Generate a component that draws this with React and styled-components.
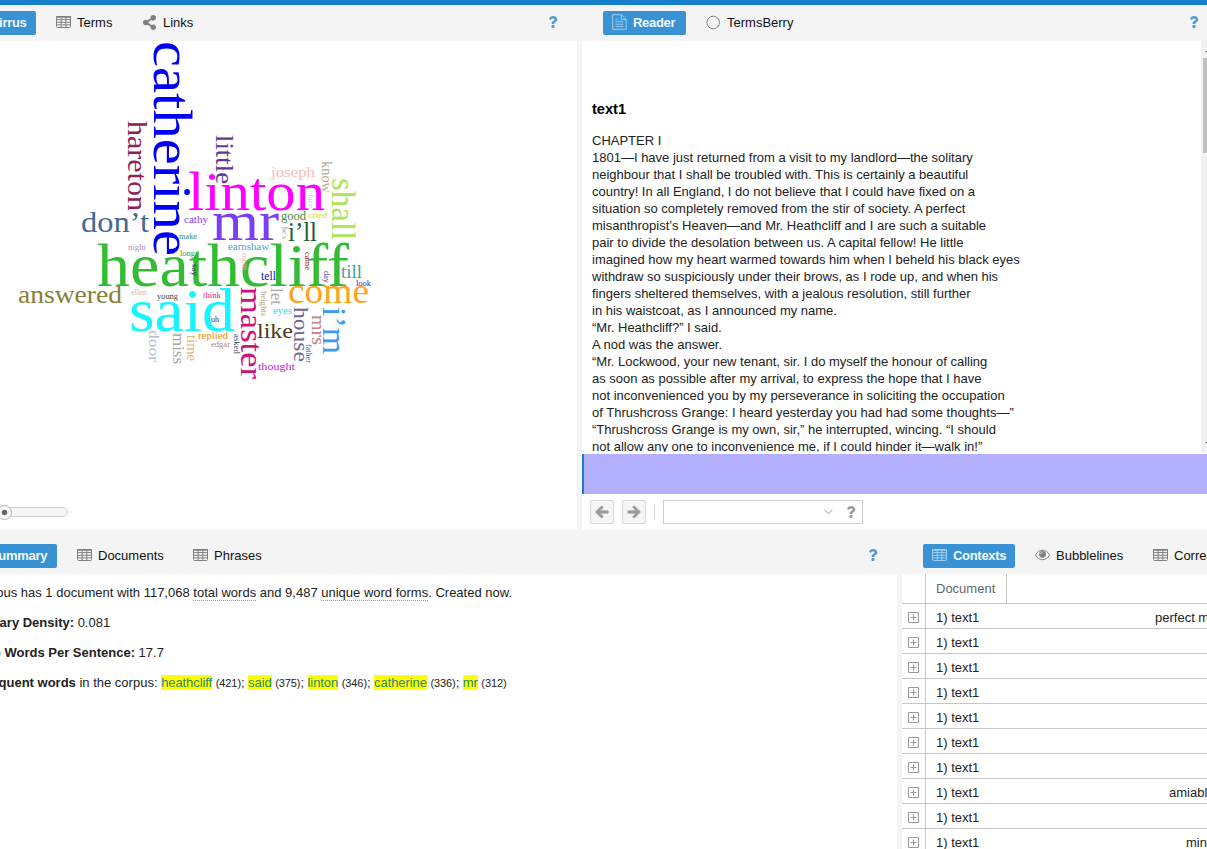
import React from "react";
import styled, { createGlobalStyle } from "styled-components";
import { FaArrowLeft, FaArrowRight, FaQuestion, FaShareAlt } from "react-icons/fa";

const GlobalStyle = createGlobalStyle`
  * { box-sizing: border-box; }
  body {
    margin: 0;
    background: #f4f4f4;
    font: 13px/17px "Liberation Sans", Arial, sans-serif;
    color: #222;
    overflow: hidden;
  }
`;

const Shell = styled.div`
  width: 1207px;
  height: 849px;
  display: flex;
  flex-direction: column;
  overflow: hidden;
  border-top: 5px solid #157fcc;
`;

const PanelRow = styled.div`
  display: grid;
  grid-template-columns: ${(p) => p.$columns};
  column-gap: 5px;
  height: ${(p) => p.$height}px;
  margin-bottom: 8px;
  flex: none;
`;

const Panel = styled.section`
  display: flex;
  flex-direction: column;
  min-width: 0;
  overflow: hidden;
`;

const PanelHeader = styled.header`
  display: flex;
  align-items: center;
  gap: 11px;
  height: 36px;
  flex: none;
  padding-left: ${(p) => p.$indent || 0}px;
  margin-left: ${(p) => p.$shift || 0}px;
`;

const Tab = styled.button`
  display: flex;
  align-items: center;
  gap: 6px;
  flex: none;
  height: 24px;
  width: ${(p) => p.$width}px;
  padding: 0 9px 2px;
  border: 0;
  border-radius: 2px;
  font: ${(p) => (p.$active ? "bold" : "normal")} 13px "Liberation Sans", Arial, sans-serif;
  letter-spacing: ${(p) => (p.$active ? "-0.3px" : "0")};
  white-space: nowrap;
  color: ${(p) => (p.$active ? "#f2f8fd" : "#111")};
  background: ${(p) => (p.$active ? "#3892d4" : "transparent")};
  svg { flex: none; color: ${(p) => (p.$active ? "#9fcdf0" : "#808080")}; }
`;

const Help = styled.span`
  display: flex;
  margin-left: auto;
  margin-right: ${(p) => p.$right}px;
  padding-bottom: 2px;
  color: #4f9bd3;
`;

const PanelBody = styled.div`
  flex: 1;
  min-height: 0;
  background: #fff;
  display: flex;
  flex-direction: column;
  overflow: hidden;
`;

const CloudCanvas = styled.svg`
  display: block;
  width: 577px;
  height: 453px;
  flex: none;
  font-family: "Liberation Serif", serif;
`;

const SliderTrack = styled.div`
  width: 78px;
  height: 10px;
  margin: 13px 0 0 -10px;
  padding-left: 6px;
  display: flex;
  align-items: center;
  border: 1px solid #cfcfcf;
  border-radius: 5px;
  background: #f5f5f5;
`;

const SliderThumb = styled.div`
  width: 15px;
  height: 15px;
  flex: none;
  border: 1px solid #b5b5b5;
  border-radius: 50%;
  background: radial-gradient(circle, #666 0 2.4px, #f8f8f8 3.2px);
`;

const ReaderArea = styled.div`
  display: flex;
  height: 411px;
  flex: none;
  overflow: hidden;
`;

const ReaderText = styled.div`
  flex: 1;
  padding: 59px 0 0 10px;
  white-space: nowrap;
`;

const ReaderTitle = styled.h1`
  margin: 0 0 14px;
  font: bold 14.6px/18px "Liberation Sans", Arial, sans-serif;
  color: #000;
`;

const ReaderLine = styled.div`
  height: 17px;
`;

const Scrollbar = styled.div`
  display: flex;
  flex-direction: column;
  width: 6px;
  padding: 10px 0 9px 2px;
  background: #f1f1f1;
`;

const ScrollArrow = styled.span`
  width: 2px;
  height: 1px;
  align-self: flex-end;
  background: #777;
`;

const ScrollThumb = styled.div`
  height: 95px;
  margin: 6px 0 auto;
  background: #c1c1c1;
`;

const Segment = styled.div`
  height: 40px;
  margin-top: 2px;
  flex: none;
  border-left: 2px solid #157fcc;
  background: #b3b1ff;
`;

const Toolbar = styled.div`
  display: flex;
  align-items: center;
  gap: 8px;
  height: 36px;
  padding-left: 8px;
`;

const ToolButton = styled.button`
  width: 24px;
  height: 24px;
  padding: 0;
  display: flex;
  align-items: center;
  justify-content: center;
  border: 1px solid #d8d8d8;
  border-radius: 2px;
  background: #f5f5f5;
  color: #999;
  svg { stroke: currentColor; stroke-width: 36px; overflow: visible; }
`;

const Divider = styled.span`
  width: 1px;
  height: 16px;
  background: #d8d8d8;
`;

const SearchBox = styled.div`
  display: flex;
  align-items: center;
  justify-content: flex-end;
  gap: 12px;
  width: 200px;
  height: 24px;
  padding-right: 5px;
  border: 1px solid #cfcfcf;
  color: #999;
`;

const SummaryBody = styled(PanelBody)`
  padding-top: 10px;
  gap: 13px;
`;

const SummaryLine = styled.p`
  margin: 0 0 0 ${(p) => p.$start}px;
  height: 17px;
  white-space: nowrap;
  small { font-size: 11px; }
`;

const Term = styled.span`
  border-bottom: 1px dotted #99a;
`;

const FrequentList = styled.span`
  letter-spacing: -0.08px;
`;

const Frequent = styled.a`
  background: #ff0;
  color: #2b8a6c;
`;

const Grid = styled.div`
  display: flex;
  flex-direction: column;
`;

const GridRow = styled.div`
  display: grid;
  grid-template-columns: 24px 81px 1fr;
  height: ${(p) => (p.$head ? 30 : 25)}px;
  flex: none;
  border-bottom: 1px solid #c6c6c6;
`;

const GridCell = styled.div`
  display: flex;
  align-items: center;
  white-space: nowrap;
  padding-top: ${(p) => (p.$muted ? 0 : 2)}px;
  padding-left: ${(p) => p.$pad || 0}px;
  color: ${(p) => (p.$muted ? "#666" : "#222")};
  border-right: ${(p) => (p.$line ? "1px solid #c6c6c6" : "0")};
`;

const TableIcon = () => (
  <svg width="15" height="12" viewBox="0 0 15 12" fill="none" stroke="currentColor">
    <rect x=".5" y=".5" width="14" height="11" rx="1" />
    <path d="M0 1h15" strokeWidth="1.6" />
    <path d="M1 3.6h13M1 6.3h13M1 8.9h13M5.2 1v10M9.8 1v10" />
  </svg>
);

const PageIcon = () => (
  <svg width="15" height="16" viewBox="0 0 15 16" fill="none" stroke="currentColor">
    <path d="M.7.7h8.6l4.900 4.800v9.800H.7zM9.300.7v4.800h4.900M3.500 7.700h7.800M3.500 10.200h7.800M3.500 12.600h7.800M3.500 5.200h3" />
  </svg>
);

const CircleIcon = () => (
  <svg width="15" height="15" viewBox="0 0 15 15" fill="none" stroke="currentColor">
    <circle cx="7.2" cy="7.5" r="6.3" />
  </svg>
);

const EyeIcon = () => (
  <svg width="15" height="12" viewBox="0 0 15 12" fill="none" stroke="currentColor">
    <path d="M.5 6C3.5-.4 11.500-.4 14.500 6C11.500 12.300 3.500 12.300.5 6z" />
    <circle cx="7.500" cy="5.300" r="3.400" fill="currentColor" stroke="none" />
    <path d="M5.700 5.200a1.900 1.900 0 0 1 1.800-1.800" stroke="#fff" strokeWidth=".8" />
  </svg>
);

const CloudIcon = () => (
  <svg width="15" height="12" viewBox="0 0 15 12" fill="currentColor">
    <path d="M4 11a3.500 3.500 0 0 1-.6-6.900A4.500 4.500 0 0 1 12 5a3 3 0 0 1 0 6z" />
  </svg>
);

const ExpandIcon = () => (
  <svg width="11" height="11" viewBox="0 0 11 11" fill="none" stroke="#999">
    <path d="M.5.5h10v10H.5zM2.500 5.500h6M5.500 2.500v6" />
  </svg>
);

const ChevronIcon = () => (
  <svg width="9" height="6" viewBox="0 0 9 6" fill="none" stroke="currentColor">
    <path d="M.5.8l4 4 4-4" />
  </svg>
);

// [word, x, baseline y, length, font size, colour]
const acrossWords = [
  ["linton", 188, 210, 137, 54, "#ff00ff"],
  ["mr", 212, 240, 67, 56, "#7b3ff2"],
  ["heathcliff", 97, 286, 252, 61, "#33bb33"],
  ["said", 129, 331, 106, 61, "#18f4ff"],
  ["don’t", 81, 232, 68, 30, "#416a94"],
  ["joseph", 271, 177, 44, 15, "#f5bcbc"],
  ["cathy", 184, 223, 24, 11, "#7b3ff2"],
  ["good", 281, 220, 25, 13, "#438a3c"],
  ["cried", 308, 218, 19, 9, "#c5e030"],
  ["i’ll", 288, 241, 29, 28, "#1d6334"],
  ["make", 179, 239, 18, 8, "#2f8f86"],
  ["night", 128, 250, 18, 8, "#b48cc4"],
  ["earnshaw", 228, 250, 41, 10, "#3f9ff0"],
  ["long", 180, 256, 15, 9, "#2ea043"],
  ["tell", 261, 280, 15, 12, "#1c12b0"],
  ["till", 341, 278, 21, 19, "#4a9c9c"],
  ["look", 356, 286, 15, 8, "#2818d0"],
  ["answered", 18, 303, 104, 25, "#85803a"],
  ["ellen", 131, 295, 16, 8, "#e3b382"],
  ["young", 157, 299, 21, 9, "#1c4a38"],
  ["think", 203, 298, 18, 8, "#e0208a"],
  ["oh", 211, 322, 8, 8, "#402830"],
  ["come", 288, 303, 81, 35, "#ffa31a"],
  ["eyes", 273, 314, 19, 10, "#36d4fa"],
  ["like", 257, 338, 36, 22, "#50391a"],
  ["replied", 198, 339, 30, 11, "#ec8e22"],
  ["edgar", 211, 347, 19, 8, "#b58468"],
  ["thought", 258, 370, 37, 11, "#c820d8"],
];

// [word, baseline x, top y, length, font size, colour]
const downWords = [
  ["catherine", 154, 41, 215, 55, "#0000f5"],
  ["hareton", 128, 121, 90, 28, "#8f2158"],
  ["little", 216, 135, 49, 25, "#63388f"],
  ["know", 322, 161, 32, 14, "#b9ab93"],
  ["shall", 332, 178, 62, 33, "#aee35c"],
  ["face", 308, 194, 14, 8, "#a8d8f0"],
  ["he's", 282, 227, 12, 8, "#9aa8a0"],
  ["say", 192, 264, 12, 8, "#26305c"],
  ["room", 242, 253, 17, 8, "#f0a8a8"],
  ["came", 305, 252, 18, 8, "#851048"],
  ["day", 324, 271, 12, 9, "#6a1b8a"],
  ["master", 241, 287, 92, 32, "#d0107a"],
  ["heights", 261, 291, 25, 8, "#b5a284"],
  ["let", 271, 288, 17, 17, "#a5a5a5"],
  ["house", 294, 307, 55, 22, "#6b6894"],
  ["mrs", 312, 315, 30, 19, "#c08585"],
  ["i’m", 323, 307, 47, 33, "#3a9af0"],
  ["asked", 234, 334, 20, 8, "#3a4a70"],
  ["father", 306, 344, 19, 8, "#5a5a1a"],
  ["door", 149, 330, 32, 15, "#b3c1cf"],
  ["miss", 173, 333, 31, 16, "#a0aaa8"],
  ["time", 187, 335, 26, 15, "#dcb87c"],
];

const readerLines = [
  "CHAPTER I",
  "1801—I have just returned from a visit to my landlord—the solitary",
  "neighbour that I shall be troubled with. This is certainly a beautiful",
  "country! In all England, I do not believe that I could have fixed on a",
  "situation so completely removed from the stir of society. A perfect",
  "misanthropist’s Heaven—and Mr. Heathcliff and I are such a suitable",
  "pair to divide the desolation between us. A capital fellow! He little",
  "imagined how my heart warmed towards him when I beheld his black eyes",
  "withdraw so suspiciously under their brows, as I rode up, and when his",
  "fingers sheltered themselves, with a jealous resolution, still further",
  "in his waistcoat, as I announced my name.",
  "“Mr. Heathcliff?” I said.",
  "A nod was the answer.",
  "“Mr. Lockwood, your new tenant, sir. I do myself the honour of calling",
  "as soon as possible after my arrival, to express the hope that I have",
  "not inconvenienced you by my perseverance in soliciting the occupation",
  "of Thrushcross Grange: I heard yesterday you had had some thoughts—”",
  "“Thrushcross Grange is my own, sir,” he interrupted, wincing. “I should",
  "not allow any one to inconvenience me, if I could hinder it—walk in!”",
];

// [left context, indent]
const contexts = [
  ["perfect misanthropist’s", 148],
  [""], [""], [""], [""], [""], [""],
  ["amiable", 162],
  [""],
  ["mind", 179],
];

const frequentWords = [
  ["heathcliff", 421],
  ["said", 375],
  ["linton", 346],
  ["catherine", 336],
  ["mr", 312],
];

function WordCloud() {
  return (
    <CloudCanvas viewBox="0 41 577 453">
      {acrossWords.map(([word, x, y, length, size, fill]) => (
        <text key={word} x={x} y={y} fontSize={size} fill={fill} textLength={length} lengthAdjust="spacingAndGlyphs">
          {word}
        </text>
      ))}
      {downWords.map(([word, x, y, length, size, fill]) => (
        <text key={word} transform={`translate(${x} ${y}) rotate(90)`} fontSize={size} fill={fill} textLength={length} lengthAdjust="spacingAndGlyphs">
          {word}
        </text>
      ))}
    </CloudCanvas>
  );
}

export default function App() {
  return (
    <>
      <GlobalStyle />
      <Shell>
        <PanelRow $columns="577px 1fr" $height={525}>
          <Panel>
            <PanelHeader $shift={-40}>
              <Tab $active $width={76}><CloudIcon />Cirrus</Tab>
              <Tab $width={75}><TableIcon />Terms</Tab>
              <Tab $width={70}><FaShareAlt size={15} />Links</Tab>
              <Help $right={18}><FaQuestion size={12} /></Help>
            </PanelHeader>
            <PanelBody>
              <WordCloud />
              <SliderTrack><SliderThumb /></SliderTrack>
            </PanelBody>
          </Panel>
          <Panel>
            <PanelHeader $indent={21}>
              <Tab $active $width={83}><PageIcon />Reader</Tab>
              <Tab $width={106}><CircleIcon />TermsBerry</Tab>
              <Help $right={7}><FaQuestion size={12} /></Help>
            </PanelHeader>
            <PanelBody>
              <ReaderArea>
                <ReaderText>
                  <ReaderTitle>text1</ReaderTitle>
                  {readerLines.map((line) => <ReaderLine key={line}>{line}</ReaderLine>)}
                </ReaderText>
                <Scrollbar><ScrollArrow /><ScrollThumb /><ScrollArrow /></Scrollbar>
              </ReaderArea>
              <Segment />
              <Toolbar>
                <ToolButton><FaArrowLeft size={14} /></ToolButton>
                <ToolButton><FaArrowRight size={14} /></ToolButton>
                <Divider />
                <SearchBox><ChevronIcon /><FaQuestion size={12} /></SearchBox>
              </Toolbar>
            </PanelBody>
          </Panel>
        </PanelRow>
        <PanelRow $columns="897px 1fr" $height={311}>
          <Panel>
            <PanelHeader $shift={-40}>
              <Tab $active $width={97}><TableIcon />Summary</Tab>
              <Tab $width={105}><TableIcon />Documents</Tab>
              <Tab $width={88}><TableIcon />Phrases</Tab>
              <Help $right={18}><FaQuestion size={12} /></Help>
            </PanelHeader>
            <SummaryBody>
              <SummaryLine $start={-50}>
                This corpus has 1 document with 117,068 <Term>total words</Term> and 9,487 <Term>unique word forms</Term>. Created now.
              </SummaryLine>
              <SummaryLine $start={-50}><b>Vocabulary Density:</b> 0.081</SummaryLine>
              <SummaryLine $start={-50}><b>Average Words Per Sentence:</b> 17.7</SummaryLine>
              <SummaryLine $start={-52}>
                <b>Most frequent words</b> in the corpus:{" "}
                <FrequentList>
                  {frequentWords.map(([word, count], i) => (
                    <React.Fragment key={word}>
                      <Frequent>{word}</Frequent> <small>({count})</small>
                      {i < frequentWords.length - 1 ? "; " : ""}
                    </React.Fragment>
                  ))}
                </FrequentList>
              </SummaryLine>
            </SummaryBody>
          </Panel>
          <Panel>
            <PanelHeader $indent={21}>
              <Tab $active $width={92}><TableIcon />Contexts</Tab>
              <Tab $width={107}><EyeIcon />Bubblelines</Tab>
              <Tab $width={110}><TableIcon />Correlations</Tab>
            </PanelHeader>
            <PanelBody>
              <Grid>
                <GridRow $head>
                  <GridCell $line />
                  <GridCell $line $muted $pad={10}>Document</GridCell>
                  <GridCell />
                </GridRow>
                {contexts.map(([text, pad], i) => (
                  <GridRow key={i}>
                    <GridCell $line $pad={6}><ExpandIcon /></GridCell>
                    <GridCell $pad={10}>1) text1</GridCell>
                    <GridCell $pad={pad}>{text}</GridCell>
                  </GridRow>
                ))}
              </Grid>
            </PanelBody>
          </Panel>
        </PanelRow>
      </Shell>
    </>
  );
}
